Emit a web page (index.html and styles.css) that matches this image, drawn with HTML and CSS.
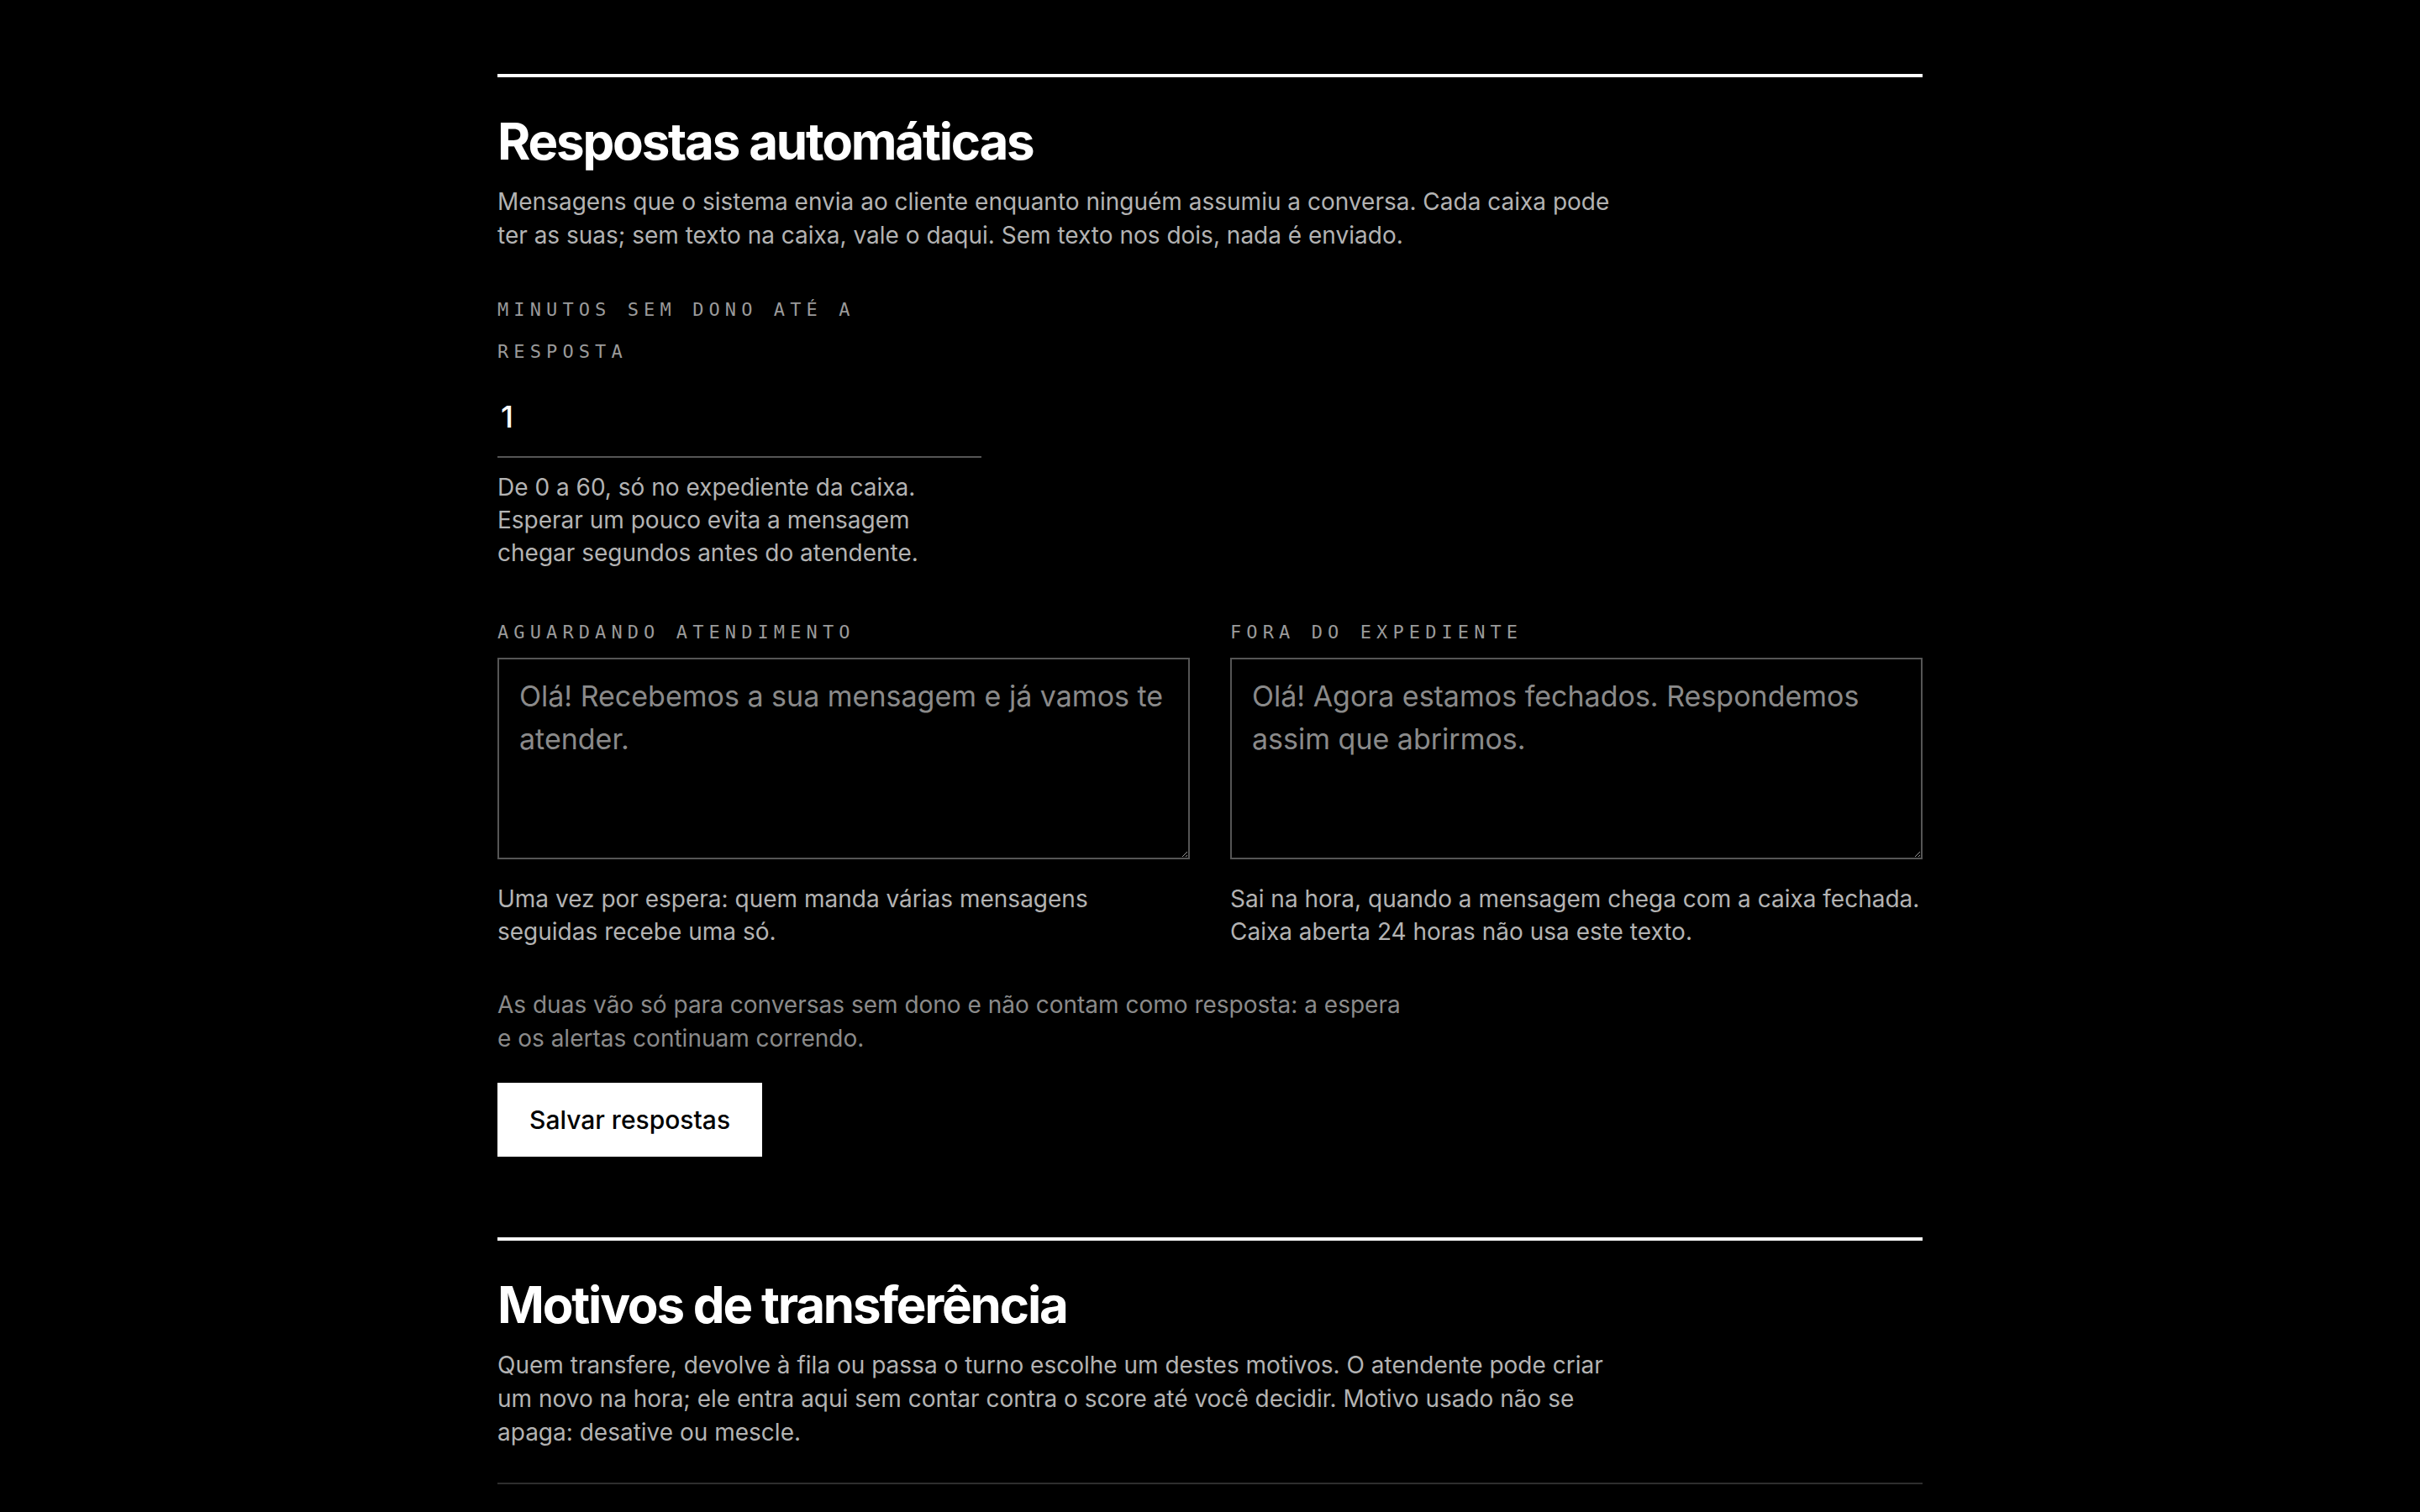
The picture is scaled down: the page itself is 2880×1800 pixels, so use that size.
FILE: index.html
```html
<!DOCTYPE html>
<html lang="pt-BR">
<head>
<meta charset="utf-8">
<title>Configurações — Respostas automáticas</title>
<link rel="stylesheet" href="styles.css">
</head>
<body>
<main class="page">
  <section class="block">
    <h2 class="block-title">Respostas automáticas</h2>
    <p class="block-intro">Mensagens que o sistema envia ao cliente enquanto ninguém assumiu a conversa. Cada caixa pode ter as suas; sem texto na caixa, vale o daqui. Sem texto nos dois, nada é enviado.</p>

    <div class="field field-minutes">
      <label class="field-label" for="wait-minutes">Minutos sem dono até a resposta</label>
      <input class="line-input" id="wait-minutes" type="number" min="0" max="60" value="1">
      <p class="field-help">De 0 a 60, só no expediente da caixa. Esperar um pouco evita a mensagem chegar segundos antes do atendente.</p>
    </div>

    <div class="pair">
      <div class="field">
        <label class="field-label" for="msg-waiting">Aguardando atendimento</label>
        <textarea class="box-input" id="msg-waiting" placeholder="Olá! Recebemos a sua mensagem e já vamos te atender."></textarea>
        <p class="field-help field-help-box">Uma vez por espera: quem manda várias mensagens seguidas recebe uma só.</p>
      </div>
      <div class="field">
        <label class="field-label" for="msg-closed">Fora do expediente</label>
        <textarea class="box-input" id="msg-closed" placeholder="Olá! Agora estamos fechados. Respondemos assim que abrirmos."></textarea>
        <p class="field-help field-help-box">Sai na hora, quando a mensagem chega com a caixa fechada. Caixa aberta 24 horas não usa este texto.</p>
      </div>
    </div>

    <p class="block-note">As duas vão só para conversas sem dono e não contam como resposta: a espera e os alertas continuam correndo.</p>

    <button class="btn-primary" type="button">Salvar respostas</button>
  </section>

  <section class="block block-next">
    <h2 class="block-title">Motivos de transferência</h2>
    <p class="block-intro block-intro-list">Quem transfere, devolve à fila ou passa o turno escolhe um destes motivos. O atendente pode criar um novo na hora; ele entra aqui sem contar contra o score até você decidir. Motivo usado não se apaga: desative ou mescle.</p>
    <div class="reason-list"></div>
  </section>
</main>
</body>
</html>
```

FILE: styles.css
```css
html {
  color-scheme: dark;
  background: #000;
}

body {
  margin: 0;
  background: #000;
  color: #fff;
  font-family: Inter, "Noto Sans", "Liberation Sans", sans-serif;
}

.page {
  width: 1696px;
  margin: 0 auto;
  padding: 88px 0 120px;
}

.block {
  border-top: 4px solid #fff;
  padding-top: 40px;
}

.block-next {
  margin-top: 96px;
}

.block-title {
  margin: 0 0 16px;
  font-size: 60px;
  line-height: 72px;
  font-weight: 700;
  letter-spacing: -2.2px;
  color: #fff;
}

.block-intro {
  margin: 0 0 44px;
  max-width: 1360px;
  font-size: 28px;
  line-height: 40px;
  color: #b3b3b3;
}

.block-intro-list {
  margin-bottom: 40px;
}

.field-label {
  display: block;
  margin-bottom: 5px;
  font-family: "DejaVu Sans Mono", "Liberation Mono", monospace;
  font-size: 22px;
  line-height: 50px;
  letter-spacing: 6.1px;
  text-transform: uppercase;
  color: #9a9a9a;
}

.field-minutes {
  width: 576px;
}

.line-input {
  display: block;
  box-sizing: border-box;
  width: 100%;
  margin: 0;
  padding: 25px 0 25px 4px;
  border: 0;
  border-bottom: 2px solid #555;
  background: transparent;
  color: #fff;
  font-family: inherit;
  font-size: 36px;
  font-weight: 500;
  line-height: 44px;
  outline: none;
  -moz-appearance: textfield;
}

.line-input::-webkit-inner-spin-button,
.line-input::-webkit-outer-spin-button {
  -webkit-appearance: none;
  margin: 0;
}

.field-help {
  margin: 16px 0 0;
  font-size: 28px;
  line-height: 39px;
  color: #b3b3b3;
}

.pair {
  display: grid;
  grid-template-columns: 1fr 1fr;
  gap: 48px;
  margin-top: 50px;
}

.box-input {
  display: block;
  box-sizing: border-box;
  width: 100%;
  height: 240px;
  margin: 0;
  padding: 18px 24px;
  border: 2px solid #555;
  border-radius: 0;
  background: #000;
  color: #fff;
  font-family: inherit;
  font-size: 34px;
  line-height: 51px;
  outline: none;
}

.box-input::placeholder {
  color: #8a8a8a;
  opacity: 1;
}

.field-help-box {
  margin-top: 28px;
}

.block-note {
  margin: 47px 0 0;
  max-width: 1090px;
  font-size: 28px;
  line-height: 40px;
  color: #8a8a8a;
}

.btn-primary {
  display: block;
  height: 88px;
  margin-top: 33px;
  padding: 0 38px;
  border: 0;
  border-radius: 0;
  background: #fff;
  color: #000;
  font-family: inherit;
  font-size: 30px;
  font-weight: 500;
  cursor: pointer;
}

.reason-list {
  border-top: 2px solid #2e2e2e;
  min-height: 200px;
}
```
